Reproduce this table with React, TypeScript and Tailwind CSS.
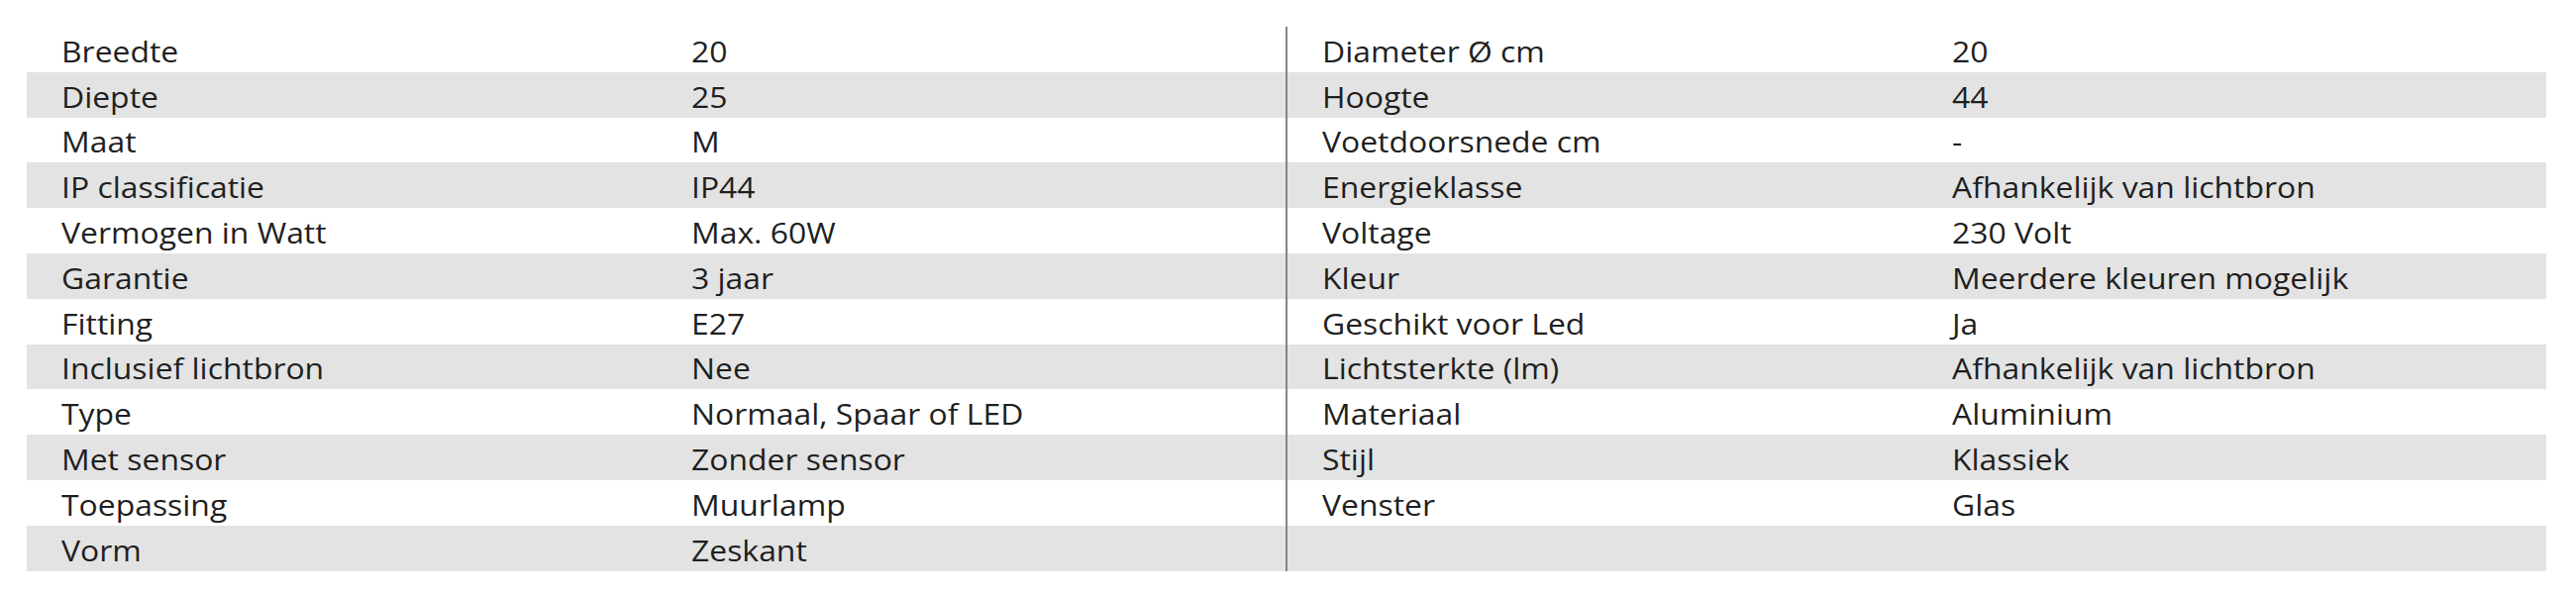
import React from "react";

const left: [string, string][] = [
  ["Breedte", "20"],
  ["Diepte", "25"],
  ["Maat", "M"],
  ["IP classificatie", "IP44"],
  ["Vermogen in Watt", "Max. 60W"],
  ["Garantie", "3 jaar"],
  ["Fitting", "E27"],
  ["Inclusief lichtbron", "Nee"],
  ["Type", "Normaal, Spaar of LED"],
  ["Met sensor", "Zonder sensor"],
  ["Toepassing", "Muurlamp"],
  ["Vorm", "Zeskant"],
];

const right: [string, string][] = [
  ["Diameter Ø cm", "20"],
  ["Hoogte", "44"],
  ["Voetdoorsnede cm", "-"],
  ["Energieklasse", "Afhankelijk van lichtbron"],
  ["Voltage", "230 Volt"],
  ["Kleur", "Meerdere kleuren mogelijk"],
  ["Geschikt voor Led", "Ja"],
  ["Lichtsterkte (lm)", "Afhankelijk van lichtbron"],
  ["Materiaal", "Aluminium"],
  ["Stijl", "Klassiek"],
  ["Venster", "Glas"],
  ["", ""],
];

function Column({ rows }: { rows: [string, string][] }) {
  return (
    <div className="flex flex-col w-[1271px]">
      {rows.map(([k, v], i) => (
        <div
          key={i}
          className={`flex items-center h-[45.8px] pt-[3px] ${i % 2 === 1 ? "bg-[#e3e3e3]" : "bg-white"}`}
        >
          <div className="w-[671px] pl-[35px] whitespace-nowrap">
            <span className="inline-block origin-left scale-x-[1.1]">{k}</span>
          </div>
          <div className="flex-1 whitespace-nowrap">
            <span className="inline-block origin-left scale-x-[1.1]">{v}</span>
          </div>
        </div>
      ))}
    </div>
  );
}

export default function App() {
  return (
    <div
      className="w-[2601px] h-[600px] bg-white pt-[27px] pl-[27px] text-[29px] leading-none text-[#1f1f1f]"
      style={{ fontFamily: '"Open Sans", sans-serif' }}
    >
      <div className="flex">
        <Column rows={left} />
        <div className="w-[2px] bg-[#858585]" />
        <Column rows={right} />
      </div>
    </div>
  );
}
